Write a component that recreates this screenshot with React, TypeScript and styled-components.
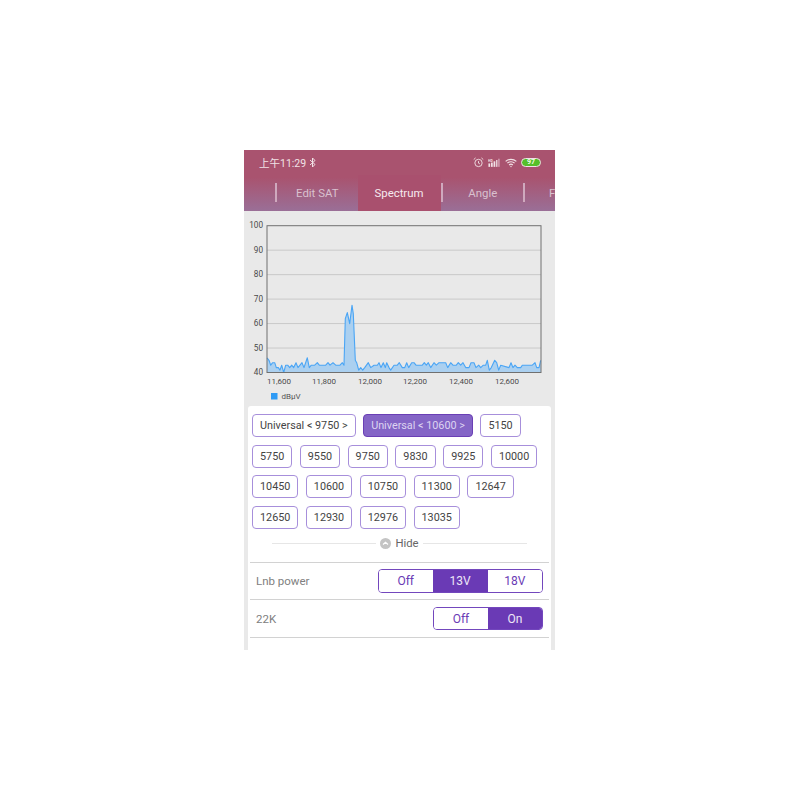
import React from 'react';
import styled, { createGlobalStyle } from 'styled-components';

const GlobalStyle = createGlobalStyle`
  html, body {
    margin: 0;
    padding: 0;
    background: #fff;
  }
  body {
    font-family: Roboto, "Noto Sans CJK SC", sans-serif;
  }
`;

// traced from the reference, x in plot px * 3, y in dBuV
const samples: [number, number][] = [
  [69, 46], [75, 45], [80, 43], [86, 44], [92, 44], [97, 42], [103, 42], [108, 41], [113, 43], [119, 40],
  [125, 43], [131, 43], [137, 42], [143, 43], [149, 42], [156, 44], [162, 42], [168, 43], [174, 44], [180, 42],
  [190, 46], [196, 42], [202, 43], [212, 43], [220, 44], [226, 43], [245, 43], [252, 44], [258, 43], [267, 44],
  [275, 43], [288, 43], [295, 44], [300, 43], [304, 62], [310, 64.5], [317, 60], [324, 67.5], [328, 64], [334, 45],
  [338, 44], [344, 41], [350, 42], [356, 41], [362, 42], [373, 44], [380, 42], [390, 43], [400, 43], [405, 44],
  [411, 42], [418, 44], [424, 42], [428, 44], [435, 42], [440, 41], [450, 43], [460, 43], [466, 44], [475, 42],
  [482, 42], [488, 44], [494, 42], [503, 44], [510, 44], [516, 43], [535, 43], [541, 44], [547, 43], [553, 44],
  [560, 42], [570, 44], [577, 43], [585, 44], [605, 44], [611, 42], [620, 44], [627, 43], [637, 43], [643, 44],
  [650, 43], [657, 44], [665, 42], [675, 42], [681, 44], [690, 44], [696, 42], [704, 43], [710, 42], [718, 43],
  [725, 43], [730, 45], [736, 41], [742, 42], [752, 45], [758, 44], [764, 41], [770, 43], [795, 42], [801, 44],
  [807, 42], [813, 43], [820, 42], [830, 42], [835, 43], [865, 43], [873, 44], [878, 42], [885, 42], [890, 45],
];

const PLOT_LEFT = 23;
const PLOT_RIGHT = 297;
const PLOT_TOP = 10.7;
const PLOT_BOTTOM = 157.5;

const toY = (db: number) => PLOT_BOTTOM - ((db - 40) / 60) * (PLOT_BOTTOM - PLOT_TOP);

const linePoints = samples.map(([x, db]) => `${(x / 3).toFixed(1)},${toY(db).toFixed(1)}`).join(' ');
const areaPoints = `${PLOT_LEFT},${PLOT_BOTTOM} ${linePoints} ${PLOT_RIGHT},${PLOT_BOTTOM}`;

const yTicks = [100, 90, 80, 70, 60, 50, 40];
const xTicks: [string, number][] = [
  ['11,600', 35],
  ['11,800', 80],
  ['12,000', 126],
  ['12,200', 171],
  ['12,400', 217],
  ['12,600', 263],
];

const Spectrum: React.FC = () => (
  <ChartSvg viewBox="0 -4 311 195">
    {yTicks.map((tick) => (
      <g key={tick}>
        {tick !== 100 && tick !== 40 && (
          <line x1={PLOT_LEFT} x2={PLOT_RIGHT} y1={toY(tick)} y2={toY(tick)} stroke="#c9c9c9" strokeWidth="1" />
        )}
        <text x="19" y={toY(tick) + 2.5} textAnchor="end" fontSize="8.200" fill="#4a4a4a">
          {tick}
        </text>
      </g>
    ))}
    <polygon points={areaPoints} fill="#abd0f0" />
    <polyline points={linePoints} fill="none" stroke="#4aa5f5" strokeWidth="1.100" strokeLinejoin="round" />
    <rect x={PLOT_LEFT} y={PLOT_TOP} width={PLOT_RIGHT - PLOT_LEFT} height={PLOT_BOTTOM - PLOT_TOP} fill="none" stroke="#707070" strokeWidth="1" />
    {xTicks.map(([label, x]) => (
      <text key={label} x={x} y="169" textAnchor="middle" fontSize="8" fill="#4a4a4a">
        {label}
      </text>
    ))}
    <rect x="27" y="178" width="6.500" height="6.500" fill="#2f9bf5" />
    <text x="37.500" y="184" fontSize="8" fill="#555">
      dBμV
    </text>
  </ChartSvg>
);

const BluetoothIcon = () => (
  <svg width="7" height="11" viewBox="0 0 7 11" fill="none" stroke="#f1e2e6" strokeWidth="1">
    <path d="M1 3l5 4.500-2.500 2.500v-9L6 3.500 1 8" />
  </svg>
);

const AlarmIcon = () => (
  <svg width="11" height="11" viewBox="0 0 12 12" fill="none" stroke="#f1e2e6" strokeWidth="1">
    <circle cx="6" cy="6.500" r="4" />
    <path d="M6 4.500v2.200l1.500 .8M.8 2.800 2.800 1M11.200 2.800 9.200 1" />
  </svg>
);

const SignalIcon = () => (
  <svg width="12" height="10" viewBox="0 0 14 11">
    <text x="0" y="4" fontSize="4" fontWeight="700" fill="#f1e2e6">
      HD
    </text>
    <rect x="0.500" y="6" width="2" height="4" fill="#f1e2e6" />
    <rect x="3.500" y="5" width="2" height="5" fill="#f1e2e6" />
    <rect x="6.500" y="3.500" width="2" height="6.500" fill="#f1e2e6" />
    <rect x="9.500" y="2" width="1.500" height="8" fill="#f1e2e6" />
    <rect x="12" y="0.500" width="1.500" height="9.500" fill="#d9a9bb" />
  </svg>
);

const WifiIcon = () => (
  <svg width="12" height="10" viewBox="0 0 13 10" fill="none" stroke="#f1e2e6" strokeWidth="1.300">
    <path d="M.7 3.300a8.500 8.500 0 0 1 11.600 0M2.600 5.200a5.700 5.700 0 0 1 7.800 0M4.500 7.100a3 3 0 0 1 4 0" />
    <circle cx="6.500" cy="8.800" r=".7" fill="#f1e2e6" stroke="none" />
  </svg>
);

const stepRows = [
  ['Universal < 9750 >', 'Universal < 10600 >', '5150'],
  ['5750', '9550', '9750', '9830', '9925', '10000'],
  ['10450', '10600', '10750', '11300', '12647'],
  ['12650', '12930', '12976', '13035'],
];

const App: React.FC = () => (
  <>
    <GlobalStyle />
    <Phone>
      <Header>
        <StatusBar>
          <StatusGroup>
            <Clock>上午11:29</Clock>
            <BluetoothIcon />
          </StatusGroup>
          <StatusIcons>
            <AlarmIcon />
            <SignalIcon />
            <WifiIcon />
            <Battery>97</Battery>
          </StatusIcons>
        </StatusBar>
        <Tabs>
          <TabLead />
          <TabDivider />
          <Tab>Edit SAT</Tab>
          <Tab $active>Spectrum</Tab>
          <TabDivider />
          <Tab>Angle</Tab>
          <TabDivider />
          <TabClipped>F</TabClipped>
        </Tabs>
      </Header>
      <Body>
        <Spectrum />
        <Panel>
          <StepGrid>
            {stepRows.map((row, index) => (
              <StepRow key={index}>
                {row.map((label) => (
                  <StepButton key={label} $active={label === 'Universal < 10600 >'}>
                    {label}
                  </StepButton>
                ))}
              </StepRow>
            ))}
          </StepGrid>
          <HideRow>
            <HideLine />
            <HideIcon viewBox="0 0 11 11">
              <circle cx="5.500" cy="5.500" r="5.500" fill="#c4c4c4" />
              <path d="M3 6.500l2.500-2.300 2.500 2.300" fill="none" stroke="#fff" strokeWidth="1.200" />
            </HideIcon>
            <HideLabel>Hide</HideLabel>
            <HideLine />
          </HideRow>
          <SettingRow>
            <SettingLabel>Lnb power</SettingLabel>
            <Segments>
              <Segment $width={53.500}>Off</Segment>
              <Segment $width={55} $active>
                13V
              </Segment>
              <Segment $width={54.500}>18V</Segment>
            </Segments>
          </SettingRow>
          <SettingRow>
            <SettingLabel>22K</SettingLabel>
            <Segments>
              <Segment $width={54}>Off</Segment>
              <Segment $width={54} $active>
                On
              </Segment>
            </Segments>
          </SettingRow>
        </Panel>
      </Body>
    </Phone>
  </>
);

export default App;

const Phone = styled.div`
  width: 311px;
  height: 500px;
  margin: 150px 0 0 244px;
  overflow: hidden;
  background: #e9e9e9;
`;

const Header = styled.header`
  height: 61px;
  background: linear-gradient(180deg, #a9536f 0%, #a9536f 45%, #9a6f97 100%);
`;

const StatusBar = styled.div`
  height: 25px;
  padding: 0 14px 0 15px;
  display: flex;
  align-items: center;
  justify-content: space-between;
`;

const StatusGroup = styled.div`
  display: flex;
  align-items: center;
  gap: 3px;
`;

const Clock = styled.span`
  font-size: 10.500px;
  color: #f1e2e6;
`;

const StatusIcons = styled.div`
  display: flex;
  align-items: center;
  gap: 4.500px;
`;

const Battery = styled.span`
  width: 20px;
  height: 9px;
  box-sizing: border-box;
  border: 1px solid #f1e2e6;
  border-radius: 5px;
  background: #55c02a;
  color: #f4fbe9;
  font-size: 7px;
  font-weight: 700;
  line-height: 7px;
  text-align: center;
`;

const Tabs = styled.nav`
  height: 36px;
  display: flex;
  align-items: stretch;
  overflow: hidden;
`;

const TabLead = styled.div`
  flex: 0 0 31px;
`;

const TabDivider = styled.div`
  flex: 0 0 2px;
  height: 19px;
  margin-top: 8px;
  background: #cfa9be;
`;

const Tab = styled.div<{ $active?: boolean }>`
  flex: 0 0 ${(props) => (props.$active ? 83 : 80.500)}px;
  display: flex;
  align-items: center;
  justify-content: center;
  box-sizing: border-box;
  font-size: 11.400px;
  color: ${(props) => (props.$active ? '#f6eaee' : '#d9c1cf')};
  background: ${(props) => (props.$active ? '#a9506e' : 'transparent')};
`;

const TabClipped = styled.div`
  flex: 0 0 40px;
  padding: 11px 0 0 24px;
  font-size: 11.400px;
  color: #d9c1cf;
`;

const Body = styled.main`
  height: 439px;
  display: flex;
  flex-direction: column;
`;

const ChartSvg = styled.svg`
  display: block;
  flex: 0 0 195px;
  width: 311px;
  height: 195px;
  font-family: Roboto, sans-serif;
`;

const Panel = styled.section`
  flex: 1;
  margin: 0 4px;
  padding: 8px 2px 0;
  background: #fff;
  border-radius: 3px 3px 0 0;
`;

const StepGrid = styled.div`
  display: flex;
  flex-direction: column;
  gap: 7.500px;
  padding-left: 2px;
`;

const StepRow = styled.div`
  display: flex;
  gap: 7.500px;
`;

const StepButton = styled.div<{ $active?: boolean }>`
  height: 23px;
  padding: 0 7px;
  box-sizing: border-box;
  display: flex;
  align-items: center;
  border-radius: 4px;
  border: 1px solid ${(props) => (props.$active ? '#6a3fb5' : '#a78fdb')};
  background: ${(props) => (props.$active ? '#8465c6' : '#fff')};
  color: ${(props) => (props.$active ? '#ddd4f1' : '#444')};
  font-size: 10.800px;
  white-space: nowrap;
`;

const HideRow = styled.div`
  height: 30px;
  margin-bottom: 3.500px;
  padding: 0 22px;
  display: flex;
  align-items: center;
  gap: 4px;
`;

const HideLine = styled.div`
  flex: 1;
  height: 1px;
  background: #e6e6e6;
`;

const HideIcon = styled.svg`
  width: 11px;
  height: 11px;
`;

const HideLabel = styled.span`
  font-size: 11.300px;
  color: #666;
`;

const SettingRow = styled.div`
  height: 37.300px;
  box-sizing: border-box;
  border-top: 1.500px solid #d2d2d2;
  padding-right: 6px;
  display: flex;
  align-items: center;
  justify-content: space-between;

  &:last-child {
    height: 38.800px;
    border-bottom: 1.500px solid #d2d2d2;
  }
`;

const SettingLabel = styled.span`
  padding-left: 6px;
  font-size: 11.500px;
  color: #808080;
`;

const Segments = styled.div`
  display: flex;
  height: 23.500px;
  box-sizing: border-box;
  border: 1.500px solid #7347bd;
  border-radius: 4px;
  overflow: hidden;
`;

const Segment = styled.div<{ $width: number; $active?: boolean }>`
  width: ${(props) => props.$width}px;
  display: flex;
  align-items: center;
  justify-content: center;
  font-size: 12px;
  color: ${(props) => (props.$active ? '#eee8f7' : '#6a3ab5')};
  background: ${(props) => (props.$active ? '#6a3ab5' : '#fff')};
`;
